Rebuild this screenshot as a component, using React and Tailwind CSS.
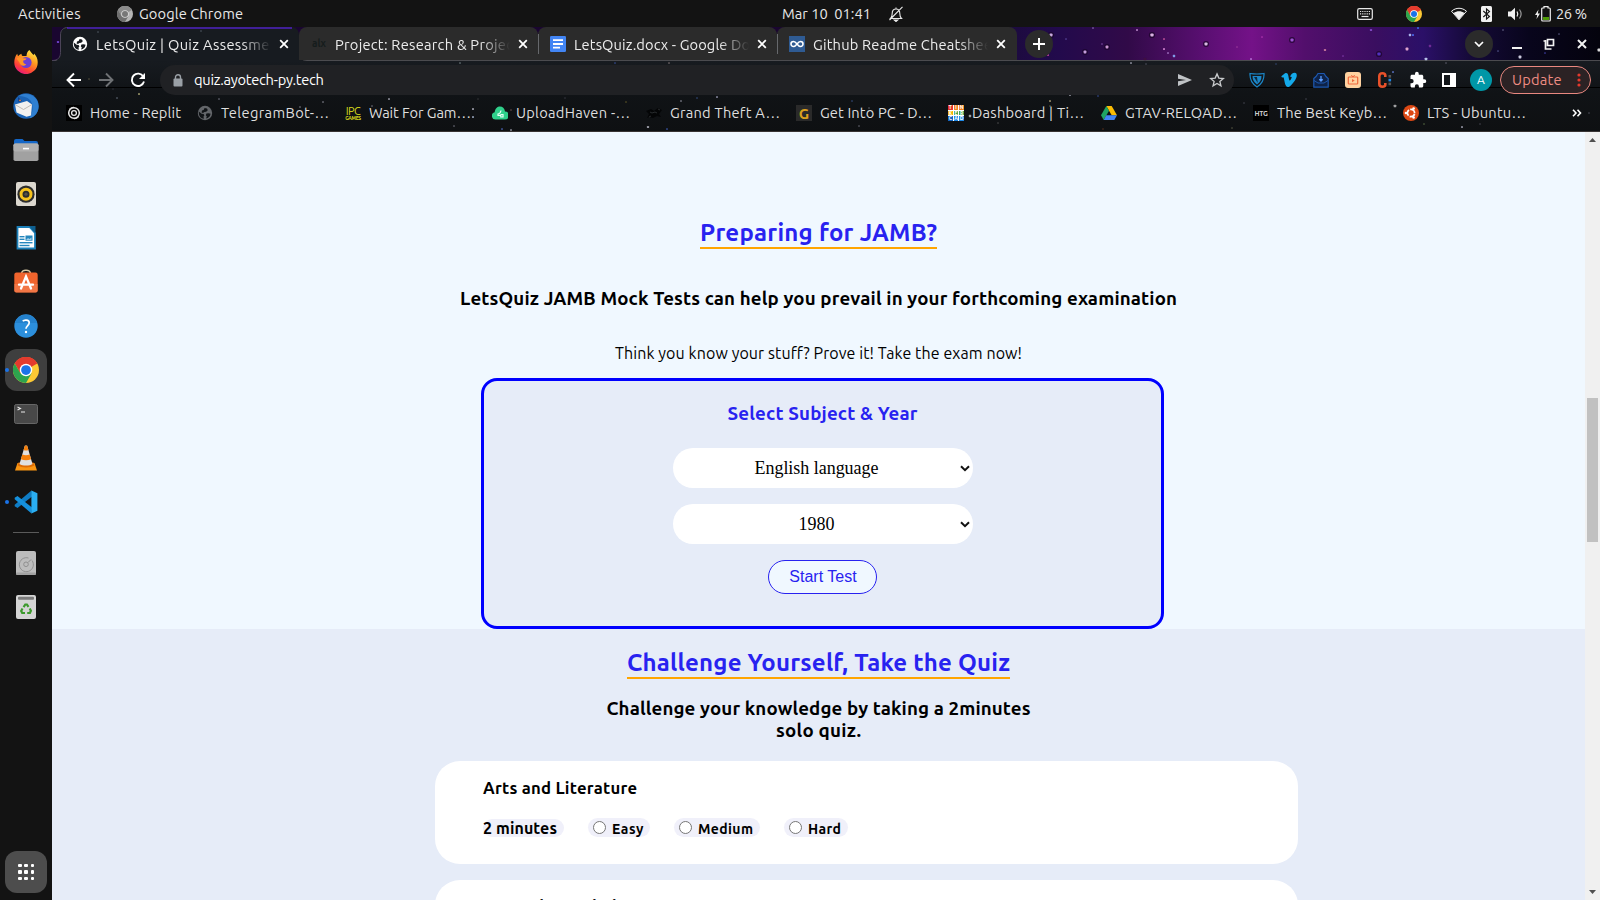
import React, { useLayoutEffect, useRef, useState } from "react";

/* Text run whose tracking is computed so that it fills exactly w pixels. */
function Fit({ w, className = "", children }) {
  const ref = useRef(null);
  const [ls, setLs] = useState(0);
  useLayoutEffect(() => {
    const natural = ref.current.getBoundingClientRect().width;
    const n = Math.max(1, children.length - 1);
    setLs((w - natural) / n);
  }, [w, children]);
  return (
    <span className={"block shrink-0 whitespace-pre " + className} style={{ width: w }}>
      <span ref={ref} className="inline-block" style={{ letterSpacing: ls }}>
        {children}
      </span>
    </span>
  );
}

function ChromeLogo({ className, grey }) {
  const c = grey ? ["#8a8a8a", "#6f6f6f", "#b5b5b5", "#777", "#d8d8d8"] : ["#e33b2e", "#2da44e", "#fcc934", "#1a73e8", "#fff"];
  return (
    <svg viewBox="0 0 48 48" className={className}>
      <circle cx="24" cy="24" r="24" fill={c[2]} />
      <path d="M24 24 3.2 12A24 24 0 0 1 44.8 12Z" fill={c[0]} />
      <path d="M24 12h20.8A24 24 0 0 0 3.2 12l10.4 18Z" fill={c[0]} />
      <path d="M3.2 12A24 24 0 0 0 24 48l10.4-18L24 34 13.6 30Z" fill={c[1]} />
      <circle cx="24" cy="24" r="11.5" fill={c[4]} />
      <circle cx="24" cy="24" r="9" fill={c[3]} />
    </svg>
  );
}

function Globe({ className, fg, bg }) {
  return (
    <svg viewBox="0 0 16 16" className={className}>
      <circle cx="8" cy="8" r="7.2" fill={fg} />
      <path d="M1.8 6.4 4.6 8.8l2 .2.8 1.6-.9 1 .4 2.2A6 6 0 0 1 1.8 8ZM7.6 3l2.4.4.8 1.8L9.2 6.8 7.4 7 6 8 4.6 7.4 5 5.6 6.6 5ZM9.4 8.6l2.2-.4 2 .6-.8 2.4-2 1.8-1.8.4.8-2-1-1.2Z" fill={bg} />
    </svg>
  );
}

function Firefox() {
  return (
    <svg viewBox="0 0 24 24" className="size-6">
      <defs>
        <linearGradient id="ff" x1="0.8" y1="0" x2="0.25" y2="1">
          <stop offset="0" stopColor="#fff04a" />
          <stop offset="0.4" stopColor="#ff9a1f" />
          <stop offset="0.75" stopColor="#ff4038" />
          <stop offset="1" stopColor="#e31587" />
        </linearGradient>
      </defs>
      <path d="M15.5 0c1 2 2.3 3 4 5 .5-.4.6-1 .6-1.6C22.6 6 23.8 9 23.7 12.4A11.7 11.5 0 0 1 .3 12.8C.2 9.5 1.2 6 3.2 3.8L4 6.3C5 5 6.2 4.3 7.5 3.8c-.1 1 .2 1.8 1 2.3l4-.2C12.5 3.5 13.5 1.2 15.5 0Z" fill="url(#ff)" />
      <circle cx="12" cy="12.5" r="5.6" fill="#6b3fd6" />
      <path d="M2.5 8.5C4.5 7 7 7 9 8.2l3.5.2c-.3 1.3-2 1.8-3.2 2.2-.6 2 .8 3.8 3 3.6C9.5 17 6 15.5 5.5 12.5Z" fill="#ff9527" />
    </svg>
  );
}

function Thunderbird() {
  return (
    <svg viewBox="0 0 26 26" className="size-[26px]">
      <circle cx="13" cy="13" r="12.7" fill="#1b63b5" />
      <path d="M6 3C14-2 26 3 25.5 14c-.3 6-4 10-9 11.5C20 20 21 12 17 7 14 4 10 3 6 3Z" fill="#2f7fd0" />
      <path d="M2 11.5 14 8l5 3.5-1 11-4.5 1.2L3.5 19.5Z" fill="#f3f1ef" />
      <path d="m2 11.5 8.5 5L19 11.5" fill="none" stroke="#bcb6b0" strokeWidth="0.9" />
      <path d="M5 4 9 8 5.5 9Z" fill="#103a80" />
      <circle cx="7" cy="7.3" r="0.9" fill="#e8853a" />
    </svg>
  );
}

function Files() {
  return (
    <svg viewBox="0 0 26 24" className="h-6 w-[26px]">
      <path d="M1 3a2 2 0 0 1 2-2h6.5l2 2H23a2 2 0 0 1 2 2v6H1Z" fill="#1467c8" />
      <rect x="0.5" y="5.5" width="25" height="17.5" rx="1.8" fill="#a1a1a1" />
      <rect x="0.5" y="5.5" width="25" height="8" rx="1.8" fill="#b0b0b0" />
      <rect x="10" y="9.8" width="6" height="1.6" fill="#fff" />
    </svg>
  );
}

function Rhythmbox() {
  return (
    <svg viewBox="0 0 20 24" className="h-6 w-5">
      <rect width="20" height="24" rx="2" fill="#dcd8cf" />
      <circle cx="10" cy="12.2" r="8.6" fill="#2d2d2d" />
      <circle cx="10" cy="12.2" r="5" fill="none" stroke="#f6c21c" strokeWidth="3" />
      <circle cx="10" cy="12.2" r="1.6" fill="#55504a" />
    </svg>
  );
}

function Writer() {
  return (
    <svg viewBox="0 0 20 24" className="h-6 w-5">
      <path d="M1.5 1h12l5.5 6v15.5H1.5Z" fill="#fff" stroke="#1b7fb8" strokeWidth="1.8" />
      <path d="M13 0h6.5v7.5Z" fill="#0f5f8f" />
      <rect x="3.5" y="10" width="5" height="1.4" fill="#2487be" />
      <rect x="3.5" y="12.6" width="5" height="1.4" fill="#2487be" />
      <rect x="9.5" y="9.5" width="7" height="5.2" fill="#2487be" />
      <path d="m10 14 2-2 1.5 1 2-1.5v2.5Z" fill="#9fd0ea" />
      <rect x="3.5" y="16" width="13" height="1.4" fill="#2487be" />
      <rect x="3.5" y="18.8" width="10" height="1.4" fill="#2487be" />
    </svg>
  );
}

function Software() {
  return (
    <svg viewBox="0 0 24 24" className="mb-[3px] size-6">
      <path d="M7.5 4.5C8 .3 16 .3 16.5 4.5" fill="none" stroke="#d8c9a4" strokeWidth="1.5" />
      <rect x="0.3" y="3.5" width="23.4" height="20" rx="2.2" fill="#f0642d" />
      <path d="M0.3 15h23.4v6.5a2 2 0 0 1-2 2H2.5a2 2 0 0 1-2.2-2Z" fill="#f38255" opacity="0.6" />
      <path d="M7 19.5 12 7.5l5 12M5 15.7h14" fill="none" stroke="#fff" strokeWidth="2.3" strokeLinecap="round" />
    </svg>
  );
}

function Help() {
  return (
    <svg viewBox="0 0 24 24" className="size-6">
      <circle cx="12" cy="12" r="11.7" fill="#2c8fdc" />
      <path d="M0.8 9a11.7 11.7 0 0 1 22.4 0Z" fill="#2481cc" />
      <path d="M8.8 7.3c1-1.6 6.4-2 6.4 1.5 0 2.7-3.2 2.8-3.2 6" fill="none" stroke="#fff" strokeWidth="1.7" />
      <circle cx="12" cy="18" r="1.2" fill="#fff" />
    </svg>
  );
}

function Terminal() {
  return (
    <svg viewBox="0 0 24 20" className="h-5 w-6">
      <rect x="0.5" y="0.5" width="23" height="19" rx="1.8" fill="#484848" stroke="#666" />
      <path d="m3.5 3 3 1.5-3 1.6M7 8h4" fill="none" stroke="#e8e8e8" strokeWidth="1.1" />
    </svg>
  );
}

function Vlc() {
  return (
    <svg viewBox="0 0 22 26" className="h-[26px] w-[22px]">
      <path d="M2.5 18h17L22 25.5H0Z" fill="#f99512" />
      <path d="M3.5 17.5h15l.8 3c-4 2.6-12.6 2.6-16.6 0Z" fill="#de6c05" />
      <path d="M9.8.8q1.2-.7 2.4 0L17.5 19c-3 2-10 2-13 0Z" fill="#e0e0e0" />
      <path d="M9.8.8q1.2-.7 2.4 0l1.2 4.2q-2.4 1-4.8 0ZM7.3 9.5q3.7 1.4 7.4 0l1.4 4.8q-5.1 2-10.2 0Z" fill="#f47f0b" />
    </svg>
  );
}

function Code() {
  return (
    <svg viewBox="0 0 24 24" className="size-6">
      <path d="M17.5.6 18 6.5 3.5 18 .7 16.3v-1.6Z" fill="#0f7cc4" />
      <path d="M17.5 23.4 18 17.5 3.5 6 .7 7.7v1.6Z" fill="#1590dc" />
      <path d="M17.4.5 23.4 3.2v17.6l-6 2.7Z" fill="#2aaef2" />
    </svg>
  );
}

function Disk() {
  return (
    <svg viewBox="0 0 20 24" className="h-6 w-5">
      <rect width="20" height="24" rx="2" fill="#bdbdbd" />
      <rect y="21.5" width="20" height="2.5" rx="1" fill="#a2a2a2" />
      <path d="M16 9.5A7 7 0 1 1 12.5 7" fill="none" stroke="#8b8b8b" strokeWidth="0.9" />
      <circle cx="10" cy="13.3" r="2.3" fill="none" stroke="#8b8b8b" strokeWidth="0.9" />
      <path d="m12 11.5 3-3" stroke="#8b8b8b" />
    </svg>
  );
}

function Trash() {
  return (
    <svg viewBox="0 0 20 24" className="h-6 w-5">
      <rect width="20" height="24" rx="2" fill="#d5d5d5" />
      <rect x="2" y="1.8" width="16" height="3" rx="1" fill="#7a7a7a" />
      <g fill="none" stroke="#3c9a2c" strokeWidth="2.2">
        <path d="m7.6 12.2 1.7-2.7h1.6l1.6 2.4" />
        <path d="m13.7 13.5 1.2 2.3-1 2.2h-2.7" />
        <path d="M9 18H6.2l-1-2 1.3-2.4" />
      </g>
    </svg>
  );
}

function DockSlot({ children, dot }) {
  return (
    <div className="relative flex h-11 w-[52px] shrink-0 items-center justify-center">
      {children}
      {dot && <span className="absolute left-[5px] top-5 size-1 rounded-full bg-[#1a73e8]" />}
    </div>
  );
}

function Dock() {
  return (
    <aside className="flex w-[52px] shrink-0 flex-col items-center bg-[#131313] pt-[13px]">
      <DockSlot><Firefox /></DockSlot>
      <DockSlot><Thunderbird /></DockSlot>
      <DockSlot><Files /></DockSlot>
      <DockSlot><Rhythmbox /></DockSlot>
      <DockSlot><Writer /></DockSlot>
      <DockSlot><Software /></DockSlot>
      <DockSlot><Help /></DockSlot>
      <DockSlot dot>
        <div className="flex size-[42px] items-center justify-center rounded-xl bg-[#3f3f3f]">
          <ChromeLogo className="size-[26px]" />
        </div>
      </DockSlot>
      <DockSlot><Terminal /></DockSlot>
      <DockSlot><Vlc /></DockSlot>
      <DockSlot dot><Code /></DockSlot>
      <div className="my-2 h-px w-[26px] shrink-0 bg-[#5a5a5a]" />
      <DockSlot><Disk /></DockSlot>
      <DockSlot><Trash /></DockSlot>
      <div className="mb-[7px] mt-auto grid size-[42px] grid-cols-3 content-center justify-center gap-[3px] rounded-xl bg-[#4d4d4d] px-[13px]">
        {[0, 1, 2, 3, 4, 5, 6, 7, 8].map((i) => (
          <span key={i} className="size-[3.5px] rounded-[1px] bg-white" />
        ))}
      </div>
    </aside>
  );
}

function TopBar() {
  return (
    <div className="flex h-[27px] shrink-0 items-center bg-[#131313] text-[14.67px] leading-[27px] text-[#e8e8e8]">
      <Fit w={62.5} className="ml-[18px]">Activities</Fit>
      <ChromeLogo grey className="ml-[36.5px] size-4 shrink-0" />
      <Fit w={104} className="ml-1.5">Google Chrome</Fit>
      <Fit w={89} className="ml-[539px]">{"Mar 10  01:41"}</Fit>
      <svg viewBox="0 0 16 16" className="ml-[17px] size-4 shrink-0" fill="none" stroke="#e8e8e8" strokeWidth="1.1">
        <path d="M2.5 12.5h11c-1.3-1.2-1.7-2.2-1.7-5C11.8 4.5 10.5 3 8 3S4.2 4.5 4.2 7.5c0 2.8-.4 3.8-1.7 5ZM8 1.5V3M14.5.8 1.5 14" />
        <path d="M6.3 14h3.4L8 15.5Z" fill="#e8e8e8" />
      </svg>
      <svg viewBox="0 0 16 12" className="ml-[453px] h-3 w-4 shrink-0">
        <rect x="0.7" y="0.7" width="14.6" height="10.6" rx="1.6" fill="none" stroke="#e8e8e8" strokeWidth="1.2" />
        <path d="M3 3.5h10M3 5.8h10" stroke="#e8e8e8" strokeWidth="1.2" strokeDasharray="1.2 1" />
        <path d="M4.5 8.5h7" stroke="#e8e8e8" strokeWidth="1.2" />
      </svg>
      <ChromeLogo className="ml-[33px] size-4 shrink-0" />
      <svg viewBox="0 0 16 14" className="ml-[29px] h-3.5 w-4 shrink-0">
        <path d="M.5 4.2C5 .3 11 .3 15.5 4.2L8 12.8Z" fill="none" stroke="#f0f0f0" strokeWidth="1" />
        <path d="M2.6 6C6 3.6 10 3.6 13.4 6L8 12.8Z" fill="#f0f0f0" />
      </svg>
      <svg viewBox="0 0 11 16" className="ml-3.5 h-4 w-[11px] shrink-0">
        <rect width="11" height="16" rx="1.5" fill="#f0f0f0" />
        <path d="m2.3 5 6.2 5.5L5.5 13V3l3 2.5L2.3 11" fill="none" stroke="#131313" strokeWidth="1.1" />
      </svg>
      <svg viewBox="0 0 15 14" className="ml-4 h-3.5 w-[15px] shrink-0">
        <path d="M0 4.5h3L7 .8v12.4L3 9.5H0Z" fill="#f0f0f0" />
        <path d="M9 4.5q1.6 2.5 0 5" stroke="#f0f0f0" fill="none" strokeWidth="1.2" />
        <path d="M11.5 2.5q3.2 4.5 0 9" stroke="#9a9a9a" fill="none" strokeWidth="1.2" />
      </svg>
      <svg viewBox="0 0 16 16" className="ml-3 size-4 shrink-0">
        <path d="M3.5 3.5 0 9h2.2L1.5 13 5 7.5H2.8Z" fill="#f0f0f0" />
        <path d="M9 2V.6h4V2h1.3q1 0 1 1v11q0 1-1 1H7.7q-1 0-1-1V3q0-1 1-1Z" fill="none" stroke="#f0f0f0" strokeWidth="1.2" />
        <rect x="8" y="11" width="6" height="3" fill="#4e9a06" />
      </svg>
      <Fit w={31} className="ml-[5px]">26 %</Fit>
    </div>
  );
}

const STARS = [
  [58, 42, 1.1, "#7a4ae0"], [98, 32, 0.7, "#5b6570"], [201, 31, 0.7, "#5b6570"], [89, 79, 0.7, "#8a7f56"], [139, 94, 1, "#d0c88a"], [117, 98, 0.8, "#8a94a6"],
  [144, 74, 0.7, "#777"], [113, 89, 0.6, "#667"], [460, 63, 0.8, "#9aa"], [615, 63, 0.8, "#46c"], [669, 63, 0.8, "#a99"], [219, 99, 0.8, "#99a"], [300, 107, 0.8, "#aab"],
  [323, 102, 0.8, "#bbc"], [389, 99, 0.9, "#dde"], [372, 106, 0.8, "#99a"], [473, 109, 1, "#dde"], [473, 117, 1, "#cdf"], [478, 99, 0.6, "#777"], [454, 126, 0.8, "#99a"],
  [502, 129, 0.9, "#5a7ae0"], [511, 130, 0.9, "#ccd"], [511, 110, 0.7, "#a77"], [565, 98, 0.6, "#778"], [626, 102, 0.7, "#983"], [648, 127, 1.1, "#eef"], [667, 129, 0.9, "#46c"],
  [681, 101, 0.8, "#ccd"], [697, 98, 0.8, "#46a"], [717, 97, 0.9, "#cce"], [852, 101, 0.8, "#46a"], [869, 108, 0.7, "#99a"], [859, 126, 0.8, "#889"], [970, 116, 1.2, "#fff"],
  [998, 123, 0.7, "#777"], [1050, 101, 1, "#cb8"], [1050, 106, 0.7, "#a95"], [1070, 95, 0.9, "#dde"], [1098, 96, 0.8, "#46c"], [1103, 129, 0.7, "#842"], [1131, 63, 0.9, "#ccd"],
  [1146, 64, 0.7, "#778"], [1199, 119, 1, "#8ab4f8"], [1204, 109, 0.7, "#99a"], [1276, 64, 0.7, "#46a"], [1393, 72, 1, "#6a8af0"], [1446, 63, 0.8, "#778"], [1395, 106, 1.3, "#fff"],
  [1462, 127, 1, "#ccd"], [1424, 124, 0.7, "#8a6"], [1232, 128, 0.7, "#886"], [1480, 124, 0.7, "#667"], [1589, 113, 0.8, "#667"], [1306, 99, 0.7, "#667"], [1244, 103, 0.7, "#667"],
  [1051, 35, 1.5, "#e8c8ff", 1], [1085, 52, 1.4, "#e0b8f8", 1], [1107, 47, 1.4, "#e8b0f0", 1], [1152, 35, 1.6, "#f8d0ff", 1], [1206, 44, 1.5, "#f6d8ff", 1],
  [1164, 39, 1, "#b04890"], [1164, 49, 1, "#d080d0"], [1168, 53, 1, "#9060b0"], [1174, 56, 1.2, "#8ab4ff"], [1137, 30, 1, "#b080c0"], [1145, 59, 1.3, "#401040"], [1093, 28, 1, "#6a4a90"],
  [1102, 44, 0.8, "#7a4aa0"], [1066, 39, 0.8, "#5a4aa0"], [1048, 55, 1, "#c040a0"], [1292, 40, 1.5, "#b060f0", 1], [1325, 50, 1.1, "#d080a0"], [1371, 30, 1.1, "#8a50d0"],
  [1379, 54, 1.6, "#5a3ad8", 1], [1410, 35, 1.2, "#c0d0ff"], [1413, 35, 1, "#4a6af0"], [1407, 49, 1.4, "#ffc0e0"], [1430, 46, 1.2, "#7a30a0"], [1426, 59, 1.3, "#d0e0ff"], [1418, 28, 1, "#3a6ad8"],
  [1520, 57, 1.4, "#eef"], [1503, 30, 0.8, "#668"], [1498, 51, 0.9, "#447"], [1545, 53, 0.9, "#338"], [1559, 34, 0.9, "#446"], [1599, 50, 1.5, "#fff"], [1343, 56, 1, "#6a2a90"], [1251, 59, 1, "#b06ad0"],
  [1237, 47, 1, "#8a2a90"], [1262, 37, 1, "#9a2aa0"],
];

function ThemeSky() {
  return (
    <svg viewBox="52 27 1548 105" className="absolute inset-0 h-[105px] w-[1548px]">
      <defs>
        <linearGradient id="sky" x1="0" x2="1" y1="0" y2="0">
          <stop offset="0" stopColor="#1c0b3e" />
          <stop offset="0.08" stopColor="#220a4c" />
          <stop offset="0.2" stopColor="#310a48" />
          <stop offset="0.33" stopColor="#5a0f72" />
          <stop offset="0.41" stopColor="#741288" />
          <stop offset="0.5" stopColor="#520f6c" />
          <stop offset="0.62" stopColor="#3a0e60" />
          <stop offset="0.7" stopColor="#2b1068" />
          <stop offset="0.78" stopColor="#150a38" />
          <stop offset="0.88" stopColor="#08051c" />
          <stop offset="1" stopColor="#04030d" />
        </linearGradient>
        <linearGradient id="shade" x1="0" x2="0" y1="0" y2="1">
          <stop offset="0" stopColor="#171b20" />
          <stop offset="0.45" stopColor="#101316" />
          <stop offset="1" stopColor="#0e1012" />
        </linearGradient>
      </defs>
      <rect x="52" y="27" width="1548" height="34" fill="#1a0630" />
      <rect x="1010" y="27" width="590" height="34" fill="url(#sky)" />
      <rect x="52" y="61" width="1548" height="71" fill="url(#shade)" />
      <path d="M52 60.5h1548" stroke="#4b4b4f" />
      <path d="M52 61.5c6 0 8-3 8-8V35c0-5 3-8 8-8h223c5 0 8 3 8 8v18c0 5 3 8 8 8Z" fill="#171b20" />
      <path d="M52 60.5c6 0 8.5-3 8.5-8V35c0-5 3-7.5 7.5-7.5" fill="none" stroke="#4b4358" />
      <path d="M67 28h225" stroke="#4f22c0" strokeWidth="1.4" />
      <path d="M52 87.5h1548" stroke="#000" />
      <path d="M52 131.5h1548" stroke="#383434" />
      {STARS.map(([x, y, r, c, halo], i) => (
        <g key={i}>
          {halo && <circle cx={x} cy={y} r={r + 1.5} fill="#1a0428" opacity="0.7" />}
          <rect x={x - r} y={y - r} width={2 * r} height={2 * r} rx={r / 2} fill={c} opacity={y > 61 ? 0.6 : 0.85} />
        </g>
      ))}
    </svg>
  );
}

function Tab({ icon, title, w, active, sep, size = "w-[239px]" }) {
  return (
    <div
      className={
        "relative flex h-[33px] shrink-0 items-center pl-3 " + size + " " +
        (active ? "" : "rounded-t-lg bg-[#2b2b2b]")
      }
    >
      <div className="flex size-4 shrink-0 items-center justify-center">{icon}</div>
      <div className="ml-2 w-[175px] shrink-0 overflow-hidden pt-px [mask-image:linear-gradient(to_right,black_83%,transparent)]">
        <Fit w={w}>{title}</Fit>
      </div>
      <svg viewBox="0 0 10 10" className="ml-2 size-[10px] shrink-0">
        <path d="m1.2 1.2 7.6 7.6m0-7.6L1.2 8.8" stroke="#fff" strokeWidth="1.8" />
      </svg>
      {sep && <span className="absolute -right-px top-[7px] z-10 h-5 w-px bg-[#66686c]" />}
    </div>
  );
}

function Tabs() {
  return (
    <div className="relative flex h-[34px] items-start pl-2 text-[14.67px] leading-[33px] text-[#ececec]">
      <Tab active title="LetsQuiz | Quiz Assessmen" w={182} icon={<Globe className="size-4" fg="#fff" bg="#171b20" />} />
      <Tab
        sep
        title="Project: Research & Projec"
        w={178}
        icon={<span className="text-[10px] font-bold leading-none text-[#151c1c]">alx</span>}
      />
      <Tab
        sep
        title="LetsQuiz.docx - Google Doc"
        w={183}
        icon={
          <svg viewBox="0 0 16 16" className="size-4">
            <rect width="16" height="16" rx="1.3" fill="#4285f4" />
            <path d="M3 4.2h10M3 8h10M3 11.7h7" stroke="#fff" strokeWidth="1.8" />
          </svg>
        }
      />
      <Tab
        title="Github Readme Cheatshee"
        w={179}
        size="w-[240px]"
        icon={
          <svg viewBox="0 0 16 16" className="size-4">
            <rect width="16" height="16" fill="#2f5b93" />
            <path d="M8 8c-1.3-1.7-2.3-2.5-3.5-2.5a2.5 2.5 0 0 0 0 5C5.7 10.5 6.7 9.7 8 8s2.3-2.5 3.5-2.5a2.5 2.5 0 0 1 0 5C10.3 10.5 9.3 9.7 8 8Z" fill="none" stroke="#fff" strokeWidth="1.6" />
          </svg>
        }
      />
      <div className="ml-2 mt-[3px] flex size-7 items-center justify-center rounded-full bg-[#2b2b2b]">
        <svg viewBox="0 0 12 12" className="size-3"><path d="M6 0v12M0 6h12" stroke="#fff" strokeWidth="2" /></svg>
      </div>
      <div className="ml-auto mr-[39px] mt-[3px] flex size-7 items-center justify-center rounded-full bg-[#2b2b2b]">
        <svg viewBox="0 0 10 6" className="h-1.5 w-2.5"><path d="m1 1 4 4 4-4" fill="none" stroke="#fff" strokeWidth="1.7" /></svg>
      </div>
      <svg viewBox="0 0 80 14" className="-ml-6 mr-3 mt-2.5 h-3.5 w-20 shrink-0" fill="none" stroke="#f2f2f2" strokeWidth="2">
        <path d="M4 11h10" />
        <path d="M39.5 2.5h6v6h-6ZM37.5 3v9h6M35.5 4h2" strokeWidth="1.7" />
        <path d="m70 3 8 8m0-8-8 8" />
      </svg>
    </div>
  );
}

function Toolbar() {
  return (
    <div className="flex h-[38px] items-center">
      <svg viewBox="0 0 16 16" className="ml-3.5 size-4 shrink-0"><path d="M15 8H2M8 1.5 1.5 8 8 14.5" fill="none" stroke="#fff" strokeWidth="1.9" /></svg>
      <svg viewBox="0 0 16 16" className="ml-4 size-4 shrink-0"><path d="M1 8h13M8 1.5 14.5 8 8 14.5" fill="none" stroke="#6e7174" strokeWidth="1.9" /></svg>
      <svg viewBox="0 0 16 16" className="ml-4 size-4 shrink-0">
        <path d="M13.3 4.5A6.2 6.2 0 1 0 14 9.5" fill="none" stroke="#fff" strokeWidth="1.9" />
        <path d="M15 1v6H9Z" fill="#fff" />
      </svg>
      <div className="ml-3.5 flex h-[30px] w-[1074px] shrink-0 items-center rounded-full bg-[#202124]">
        <svg viewBox="0 0 10 13" className="ml-[13px] h-[13px] w-2.5 shrink-0">
          <rect x="0.5" y="4.5" width="9" height="8" rx="1" fill="#9aa0a6" />
          <path d="M2.5 5V3.2a2.5 2.5 0 0 1 5 0V5" fill="none" stroke="#9aa0a6" strokeWidth="1.4" />
        </svg>
        <Fit w={130} className="ml-[11px] text-[14.67px] leading-[30px] text-white">quiz.ayotech-py.tech</Fit>
        <svg viewBox="0 0 14 12" className="ml-[854px] h-3 w-3.5 shrink-0"><path d="M0 0 14 6 0 12V7.3L8 6 0 4.7Z" fill="#c0c3c6" /></svg>
        <svg viewBox="0 0 24 24" className="ml-[17px] size-4 shrink-0"><path d="m12 2.8 2.7 6.3 6.8.6-5.2 4.5 1.6 6.7-5.9-3.6-5.9 3.6 1.6-6.7L2.5 9.7l6.8-.6Z" fill="none" stroke="#c8cacc" strokeWidth="2" /></svg>
      </div>
      <svg viewBox="0 0 16 16" className="ml-[15px] size-4 shrink-0">
        <path d="M1 1.5q7 1 14 0 .5 9-7 13.5Q.5 10.5 1 1.5Z" fill="none" stroke="#1b87c9" strokeWidth="1.2" />
        <path d="M3.5 4h9q0 5.5-4.5 8.5-4.5-3-4.5-8.5Z" fill="#1b87c9" /><path d="M5 5h3l.8 6Z" fill="#0c2a40" />
      </svg>
      <svg viewBox="0 0 16 16" className="ml-4 size-4 shrink-0">
        <path d="M.3 4.3 4 1.3c2-.8 3 .2 3.4 2.6.5 2.8.8 4.6 1.3 4.6.6 0 2.2-2.6 2-3.3-.2-.8-1-.6-1.7-.3C10 2 11.8.7 13.7.8c1.5.1 2.2 1.2 2.1 3-.1 3-4.7 9.4-7.6 11-2.2 1-3.6-.6-4.3-3.6L2.8 6c-.2-.8-.8-.8-1.7-.3Z" fill="#14a9ea" />
      </svg>
      <svg viewBox="0 0 16 16" className="ml-4 size-4 shrink-0">
        <path d="M.8 6.5 3 4.5 5 1.5h6l2 3 2.200 2v8.700H.8Z" fill="#0e2348" stroke="#1d58b0" strokeWidth="1.2" />
        <path d="M8 4v5M6.3 7.3 8 9l1.7-1.7" stroke="#5c9dff" strokeWidth="1.3" fill="none" />
        <path d="m1 8.5 4 2.5h6l4-2.5" stroke="#1d58b0" fill="none" />
      </svg>
      <svg viewBox="0 0 16 16" className="ml-4 size-4 shrink-0">
        <rect width="16" height="16" rx="3" fill="#ffd2a0" />
        <rect x="3.3" y="5" width="9.4" height="7" rx="0.8" fill="none" stroke="#f0673a" strokeWidth="1.2" />
        <path d="m6.3 3 1.7 2 1.7-2" fill="none" stroke="#f0673a" strokeWidth="1" /><path d="M7 7v3.2L9.7 8.6Z" fill="#f0673a" />
      </svg>
      <svg viewBox="0 0 16 16" className="ml-4 size-4 shrink-0">
        <path d="M8.3 5V3.5Q8.3 1.3 5.4 1.3T2.3 4v8q0 2.7 3.1 2.7t2.9-2.2V11" fill="none" stroke="#e8512a" strokeWidth="2.6" />
        <rect x="11.5" y="3" width="2.6" height="2.6" fill="#555" /><rect x="11.5" y="6.8" width="2.6" height="2.6" fill="#1e88e5" /><rect x="11.5" y="10.6" width="2.6" height="2.6" fill="#555" />
      </svg>
      <svg viewBox="0 0 24 24" className="ml-4 size-[18px] shrink-0">
        <path d="M20.5 11H19V7c0-1.1-.9-2-2-2h-4V3.5a2.5 2.5 0 0 0-5 0V5H4c-1.1 0-2 .9-2 2v3.8h1.5a2.7 2.7 0 0 1 0 5.4H2V20c0 1.1.9 2 2 2h3.8v-1.5a2.7 2.7 0 0 1 5.4 0V22H17c1.1 0 2-.9 2-2v-4h1.5a2.5 2.5 0 0 0 0-5Z" fill="#fff" />
      </svg>
      <svg viewBox="0 0 14 14" className="ml-[15px] size-3.5 shrink-0"><path d="M0 0h14v14H0ZM2 2v10h6V2Z" fill="#fff" fillRule="evenodd" /></svg>
      <div className="ml-[14px] flex size-[22px] shrink-0 items-center justify-center rounded-full bg-[#0097a7] text-[12px] text-white">A</div>
      <div className="ml-2 flex h-7 w-[91px] shrink-0 items-center rounded-full border border-[#e98880] bg-[#2b2224]">
        <Fit w={49.5} className="ml-[11px] text-[14.67px] leading-[26px] text-[#ee8c83]">Update</Fit>
        <svg viewBox="0 0 4 14" className="ml-[15.5px] h-3.5 w-1">
          <circle cx="2" cy="2" r="1.6" fill="#e5392d" /><circle cx="2" cy="7" r="1.6" fill="#e5392d" /><circle cx="2" cy="12" r="1.6" fill="#e5392d" />
        </svg>
      </div>
    </div>
  );
}

function Bookmark({ icon, label, slot, w }) {
  return (
    <div className="flex shrink-0 items-center gap-2">
      <div className="flex size-4 shrink-0 items-center justify-center">{icon}</div>
      <div className={"shrink-0 " + slot}>
        <Fit w={w}>{label}</Fit>
      </div>
    </div>
  );
}

function Bookmarks() {
  const tink = ["#e5332a", "#f08020", "#f08020", "#f5b400", "#43a047", "#43a047", "#1565c0", "#1e88e5", "#1e88e5"];
  return (
    <div className="flex h-7 items-center gap-4 pl-3.5 text-[14.67px] leading-7 text-[#dedede]">
      <Bookmark slot="w-[91px]" w={91} label="Home - Replit" icon={
        <svg viewBox="0 0 16 16" className="size-4"><rect width="16" height="16" fill="#000" /><circle cx="8" cy="8" r="5.3" fill="none" stroke="#e8e8e8" strokeWidth="1.5" /><circle cx="8" cy="8" r="2.4" fill="none" stroke="#e8e8e8" strokeWidth="1.3" /><path d="M3 4.5q2-2.5 5-2.3M13 11.5q-2 2.5-5 2.3" fill="none" stroke="#e8e8e8" /></svg>
      } />
      <Bookmark slot="w-[108px]" w={108} label="TelegramBot-…" icon={<Globe className="size-4" fg="#63666a" bg="#111417" />} />
      <Bookmark slot="w-[107px]" w={102} label="Wait For Gam…" icon={
        <span className="flex flex-col items-center text-[#d8dc1c]"><span className="text-[11px] leading-[10px] tracking-[-0.5px]">IPC</span><span className="text-[5px] font-bold leading-[5px] tracking-[-0.3px]">GAMES</span></span>
      } />
      <Bookmark slot="w-[114px]" w={114} label="UploadHaven -…" icon={
        <svg viewBox="0 0 16 16" className="size-4"><path d="M3.5 14.5a3.7 3.7 0 0 1-.8-7.3C3 3.5 5.5 1.5 8 1.5c2.6 0 4.5 1.8 5 5a3.9 3.9 0 0 1-.3 8Z" fill="#2fd08b" /><path d="M9 5.5q-.5 3-3 3.5v1.3h2.8V12H11V9.5H8.5" fill="none" stroke="#eafff5" strokeWidth="1.2" /></svg>
      } />
      <Bookmark slot="w-[110px]" w={110} label="Grand Theft A…" icon={
        <svg viewBox="0 0 16 16" className="size-4"><path d="M0 6 5 4l3 2 4-3 4 2-3 4 2 3-4-1-4 2-4-1-2 1 2-4Z" fill="#040506" /><path d="m4 7 2 1 3-1 2 1M12 4l2 1M3 12l2-1" stroke="#3a3d40" strokeWidth="0.7" fill="none" /></svg>
      } />
      <Bookmark slot="w-[112px]" w={112} label="Get Into PC - D…" icon={<span className="flex size-4 items-center justify-center bg-[#2a2a2a] text-[15px] font-bold leading-none text-[#dca11d]">G</span>} />
      <Bookmark slot="w-[113px]" w={112} label="Dashboard | Ti…" icon={
        <span className="grid size-4 grid-cols-3 gap-px bg-white text-center text-[5px] font-bold leading-[5px] text-white">
          {"TINKERCAD".split("").map((ch, i) => (
            <span key={i} className="h-[4.7px]" style={{ background: tink[i] }}>{ch}</span>
          ))}
        </span>
      } />
      <Bookmark slot="w-[112px]" w={112} label="GTAV-RELOAD…" icon={
        <svg viewBox="0 0 16 14" className="h-3.5 w-4"><path d="M5.3 0h5.4L16 9.2h-5.3Z" fill="#fbbc04" /><path d="M5.3 0 0 9.2 2.7 14 8 4.7Z" fill="#1fa463" /><path d="M5.3 9.2H16L13.3 14H2.7Z" fill="#4285f4" /></svg>
      } />
      <Bookmark slot="w-[110px]" w={110} label="The Best Keyb…" icon={<span className="flex size-4 items-center justify-center bg-black text-[7px] font-bold tracking-[-0.4px] text-[#cfcfcf]">HTG</span>} />
      <Bookmark slot="w-[98px]" w={99} label="LTS - Ubuntu…" icon={
        <svg viewBox="0 0 16 16" className="size-4"><circle cx="8" cy="8" r="8" fill="#dd4814" /><circle cx="8" cy="8" r="3.6" fill="none" stroke="#fff" strokeWidth="1.7" strokeDasharray="6.3 1.24" strokeDashoffset="-0.6" /><circle cx="3" cy="8" r="1.3" fill="#fff" /><circle cx="10.6" cy="3.5" r="1.3" fill="#fff" /><circle cx="10.6" cy="12.5" r="1.3" fill="#fff" /></svg>
      } />
      <svg viewBox="0 0 10 8" className="ml-auto mr-[18px] h-2 w-2.5 shrink-0"><path d="m1 .8 3 3.2-3 3.2M5.5.8l3 3.2-3 3.2" fill="none" stroke="#fff" strokeWidth="1.6" /></svg>
    </div>
  );
}

function Select({ children, w }) {
  return (
    <div className="relative flex h-10 w-[300px] items-center justify-center rounded-full bg-white pr-3 font-['Liberation_Serif',serif] text-[18px] text-black">
      <Fit w={w}>{children}</Fit>
      <svg viewBox="0 0 10 7" className="absolute right-[3px] top-[17px] h-[7px] w-2.5"><path d="m1 1.2 4 4 4-4" fill="none" stroke="#111" strokeWidth="2" /></svg>
    </div>
  );
}

function Choice({ label, w, box }) {
  return (
    <div className={"flex h-[19px] items-center rounded-[10px] bg-[#f0f0fa] pl-[5px] " + box}>
      <span className="size-[13px] shrink-0 rounded-full border border-[#767676] bg-white" />
      <Fit w={w} className="ml-1.5 mt-[3px] text-[14px] font-bold leading-[19px]">{label}</Fit>
    </div>
  );
}

function QuizCard({ title, w, pad }) {
  return (
    <div className={"h-[103px] w-[863px] shrink-0 rounded-[25px] bg-white pl-12 " + pad}>
      <Fit w={w} className="text-[16.7px] font-bold leading-5">{title}</Fit>
      <div className="mt-5 flex gap-6">
        <div className="mt-px h-[18px] w-[81px] rounded-[10px] bg-[#f0f0fa]">
          <Fit w={74} className="text-[16px] font-bold leading-[18px]">2 minutes</Fit>
        </div>
        <Choice label="Easy" w={31.5} box="w-[62px]" />
        <Choice label="Medium" w={55} box="w-[86px]" />
        <Choice label="Hard" w={33} box="w-16" />
      </div>
    </div>
  );
}

function Page() {
  return (
    <main className="flex h-[768px] w-[1533px] shrink-0 flex-col overflow-hidden text-black">
      <section className="flex h-[497px] shrink-0 flex-col items-center bg-[#f0f8ff] pt-[87px]">
        <h2 className="border-b-2 border-[#ffa500] text-[24px] font-bold leading-[28px] text-[#2822f0]">
          <Fit w={237}>Preparing for JAMB?</Fit>
        </h2>
        <Fit w={717} className="mt-[39px] text-[18.72px] font-bold leading-[22px]">
          LetsQuiz JAMB Mock Tests can help you prevail in your forthcoming examination
        </Fit>
        <Fit w={407} className="mt-[33px] text-[16px] leading-5">
          Think you know your stuff? Prove it! Take the exam now!
        </Fit>
        <div className="ml-2 mt-[15px] flex h-[251px] w-[683px] flex-col items-center gap-4 rounded-2xl border-[3px] border-[#0000ff] bg-[#e6ecf8] pt-[22px]">
          <Fit w={190} className="mb-[7px] text-[18.72px] font-bold leading-[22px] text-[#2822f0]">Select Subject & Year</Fit>
          <Select w={124}>English language</Select>
          <Select w={36}>1980</Select>
          <button className="flex h-[34px] w-[109px] items-center justify-center rounded-full border border-[#2822f0] bg-[#f0f8ff] pl-px font-['Liberation_Sans',sans-serif] text-[16px] text-[#2822f0]">
            Start Test
          </button>
        </div>
      </section>
      <section className="flex shrink-0 flex-col items-center bg-[#e6ecf8] pt-5">
        <h2 className="border-b-2 border-[#ffa500] text-[24px] font-bold leading-[28px] text-[#2822f0]">
          <Fit w={383}>Challenge Yourself, Take the Quiz</Fit>
        </h2>
        <Fit w={424} className="mt-[19px] text-[18.72px] font-bold leading-[22px]">Challenge your knowledge by taking a 2minutes</Fit>
        <Fit w={85} className="text-[18.72px] font-bold leading-[22px]">solo quiz.</Fit>
        <div className="mt-[19px] flex flex-col gap-4 self-start pl-[383px]">
          <QuizCard title="Arts and Literature" w={154} pad="pt-[17px]" />
          <QuizCard title="General Knowledge" w={153} pad="pt-4" />
        </div>
      </section>
    </main>
  );
}

function Scrollbar() {
  return (
    <div className="flex h-[768px] w-[15px] shrink-0 flex-col items-center bg-[#f0f0f0]">
      <svg viewBox="0 0 7 4" className="mt-1.5 h-1 w-[7px] shrink-0"><path d="M3.5 0 7 4H0Z" fill="#505050" /></svg>
      <div className="mt-[256px] h-36 w-[11px] shrink-0 bg-[#c1c1c1]" />
      <svg viewBox="0 0 7 4" className="mb-1.5 mt-auto h-1 w-[7px] shrink-0"><path d="M0 0h7L3.5 4Z" fill="#505050" /></svg>
    </div>
  );
}

export default function App() {
  return (
    <div className="flex h-[900px] w-[1600px] flex-col overflow-hidden bg-[#131313] font-['Ubuntu','Noto_Sans',sans-serif]">
      <TopBar />
      <div className="flex h-[873px]">
        <Dock />
        <div className="flex w-[1548px] flex-col">
          <header className="relative h-[105px] shrink-0">
            <ThemeSky />
            <div className="relative">
              <Tabs />
              <Toolbar />
              <Bookmarks />
            </div>
          </header>
          <div className="flex">
            <Page />
            <Scrollbar />
          </div>
        </div>
      </div>
    </div>
  );
}
